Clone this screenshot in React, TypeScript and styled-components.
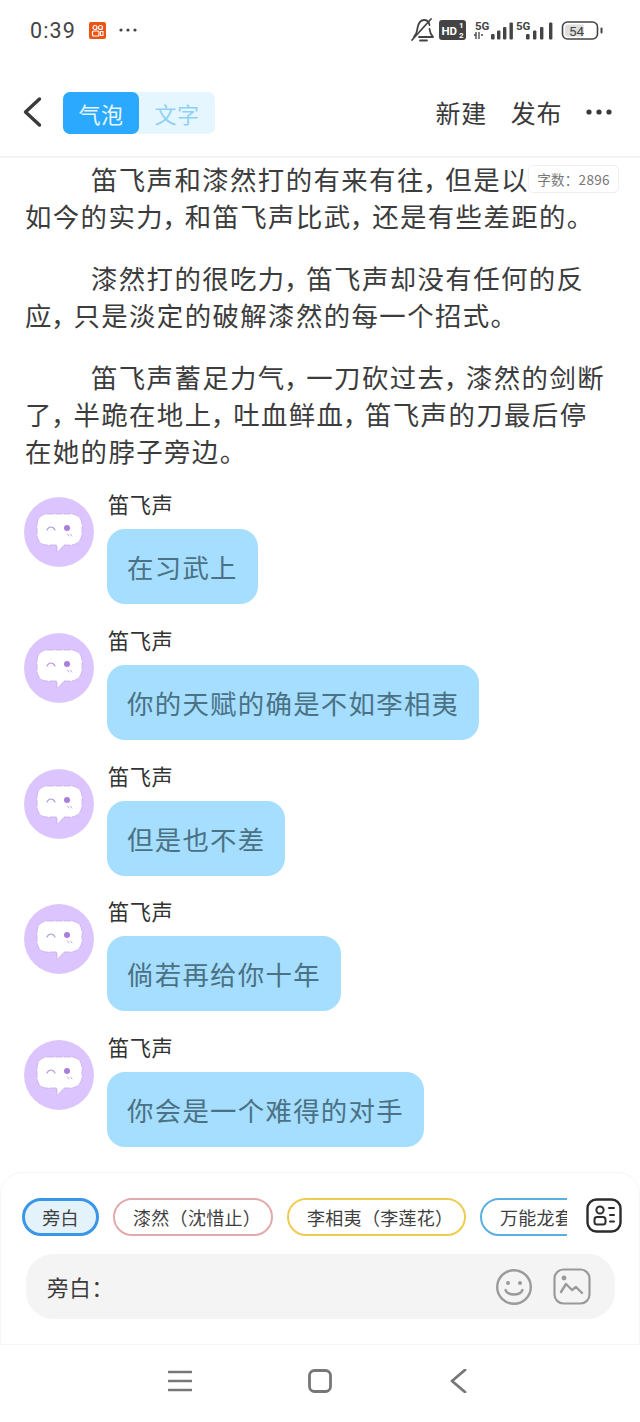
import React from "react";
import styled, { createGlobalStyle } from "styled-components";

const Global = createGlobalStyle`
  html, body { margin: 0; padding: 0; background: #fff; }
  body { font-family: "Noto Sans CJK SC", "Noto Sans", sans-serif; }
  * { box-sizing: border-box; }
`;

const Page = styled.div`
  position: relative;
  width: 640px;
  height: 1422px;
  overflow: hidden;
  display: flex;
  flex-direction: column;
  background: #fff;
`;

const StatusBar = styled.div`
  height: 60px;
  flex: none;
  display: flex;
  align-items: center;
  padding: 0 35px 0 30px;
  color: #444;
`;
const Time = styled.span`
  font-family: Roboto, sans-serif;
  font-size: 21.5px;
  letter-spacing: 1.1px;
  color: #444;
`;
const AppIcon = styled.svg`
  width: 17px;
  height: 17px;
  margin-left: 13px;
`;
const StatusDots = styled.svg`
  width: 20px;
  height: 6px;
  margin-left: 12px;
`;
const Spacer = styled.div`
  flex: 1;
`;
const StatusIcons = styled.svg`
  width: 195px;
  height: 28px;
`;

const Header = styled.div`
  height: 98px;
  flex: none;
  display: flex;
  align-items: center;
  padding: 8px 28px 0 23px;
  border-bottom: 2px solid #f3f3f3;
`;
const BackIcon = styled.svg`
  width: 19px;
  height: 32px;
`;
const Tabs = styled.div`
  display: flex;
  width: 152px;
  height: 42px;
  margin: 1px 0 0 21px;
  background: #e6f6fe;
  border-radius: 7px;
`;
const Tab = styled.div<{ $active?: boolean }>`
  width: 76px;
  display: flex;
  align-items: center;
  justify-content: center;
  border-radius: 7px;
  font-size: 22px;
  letter-spacing: 0.5px;
  background: ${(p) => (p.$active ? "#2aa9ff" : "transparent")};
  color: ${(p) => (p.$active ? "#e8f6ff" : "#8fd1f6")};
`;
const HeaderAction = styled.div`
  font-size: 25px;
  color: #3a3a3a;
  letter-spacing: 0.6px;
  margin-right: 24px;
  line-height: 1;
`;
const MoreDots = styled.svg`
  width: 26px;
  height: 6px;
`;

const Counter = styled.div`
  position: absolute;
  left: 528px;
  top: 165px;
  width: 91px;
  height: 28px;
  border: 1px solid #efefef;
  border-radius: 5px;
  background: #fff;
  color: #777;
  font-size: 13.5px;
  display: flex;
  align-items: center;
  justify-content: center;
  letter-spacing: 0.3px;
  white-space: nowrap;
`;

const Content = styled.div`
  flex: 1;
  min-height: 0;
  padding: 2px 25px 0 25px;
  overflow: hidden;
`;
const Para = styled.p`
  margin: 0 0 25px;
  font-size: 26.4px;
  line-height: 37px;
  letter-spacing: 1.42px;
  text-indent: 66px;
  color: #3c3c3c;
  &:last-of-type {
    margin-bottom: 28px;
  }
`;
const Comma = styled.span`
  font-feature-settings: "palt";
  margin-right: 6px;
`;

const Message = styled.div`
  display: flex;
  gap: 13px;
  height: 135.75px;
  margin-left: -1px;
`;
const Avatar = styled.svg`
  width: 70px;
  height: 70px;
  flex: none;
`;
const MsgBody = styled.div`
  display: flex;
  flex-direction: column;
  align-items: flex-start;
`;
const Name = styled.div`
  font-size: 21.2px;
  line-height: 32px;
  height: 32px;
  margin-left: 1px;
  margin-top: -9px;
  color: #333;
  letter-spacing: 0.6px;
`;
const Bubble = styled.div`
  height: 75px;
  margin-top: 9px;
  padding: 0 20px;
  display: flex;
  align-items: center;
  border-radius: 18px;
  background: #a5deff;
  color: #4b7184;
  font-size: 26.4px;
  letter-spacing: 1.3px;
  white-space: nowrap;
`;

const Panel = styled.div`
  height: 173px;
  flex: none;
  border: 1px solid #f6f6f6;
  border-radius: 22px 22px 0 0;
  padding: 25px 0 0 21px;
  display: flex;
  flex-direction: column;
`;
const ChipRow = styled.div`
  display: flex;
  align-items: flex-start;
`;
const ChipScroll = styled.div`
  width: 545px;
  height: 38px;
  display: flex;
  gap: 14px;
  overflow: hidden;
  flex: none;
`;
const Chip = styled.div<{ $color: string; $w: number; $selected?: boolean }>`
  width: ${(p) => p.$w}px;
  height: 38px;
  flex: none;
  border-radius: 19px;
  border: ${(p) => (p.$selected ? 3 : 2)}px solid ${(p) => p.$color};
  background: ${(p) => (p.$selected ? "#e3f2fb" : "#fff")};
  color: #3f3f3f;
  font-size: 18px;
  letter-spacing: 0.3px;
  display: flex;
  align-items: center;
  justify-content: ${(p) => (p.$selected ? "center" : "flex-start")};
  padding-left: ${(p) => (p.$selected ? 0 : 18)}px;
  white-space: nowrap;
`;
const ContactIcon = styled.svg`
  width: 36px;
  height: 35px;
  margin-left: 19px;
`;
const InputBar = styled.div`
  width: 589px;
  height: 65px;
  margin: 18px 0 0 4px;
  border-radius: 27px;
  background: #f4f4f4;
  display: flex;
  align-items: center;
  padding: 0 24px 0 21px;
`;
const InputLabel = styled.div`
  font-size: 21.5px;
  color: #3a3a3a;
  letter-spacing: 0.8px;
  flex: 1;
  font-feature-settings: "palt";
`;
const InputIcon = styled.svg`
  width: 38px;
  height: 38px;
  margin-left: 20px;
`;

const NavBar = styled.div`
  height: 77px;
  flex: none;
  display: flex;
  align-items: center;
  justify-content: center;
  gap: 116px;
  padding-bottom: 5px;
`;
const NavIcon = styled.svg`
  width: 24px;
  height: 24px;
`;

const BubbleAvatar = () => (
  <Avatar viewBox="0 0 70 70">
    <circle cx="35" cy="35" r="35" fill="#dcc5ff" />
    <path
      d="M23 17 H47 C54 17 58 22 58 28 V36 C58 43 53 48 47 48 H40 L33 56 L33 48 H23 C16 48 13 43 13 36 V28 C13 22 17 17 23 17 Z"
      fill="#fff"
      stroke="#c8a9ea"
      strokeWidth="0.8"
      strokeDasharray="7 1.5"
    />
    <path d="M23 33 C25 29 29 29 31 33" fill="none" stroke="#b79ae0" strokeWidth="1.2" strokeLinecap="round" />
    <circle cx="43" cy="31" r="3" fill="#a97fdc" />
    <path d="M43.5 37 L45 39 M46.5 37 L48 39" stroke="#c8a9ea" strokeWidth="1" strokeLinecap="round" />
  </Avatar>
);

const ParaLines = ({ lines }: { lines: string[] }) => (
  <Para>
    {lines.map((line, n) => (
      <React.Fragment key={n}>
        {n > 0 && <br />}
        {line.split("，").flatMap((part, i) =>
          i === 0 ? [part] : [<Comma key={i}>，</Comma>, part]
        )}
      </React.Fragment>
    ))}
  </Para>
);

const Bars = ({ x, gaps }: { x: number; gaps: number[] }) => (
  <g fill="#444">
    <rect x={x} y="18" width="3.6" height="5.5" rx="1.2" />
    <rect x={x + gaps[0]} y="14.5" width="3.4" height="9" rx="1" />
    <rect x={x + gaps[1]} y="11" width="3.4" height="12.5" rx="1" />
    <rect x={x + gaps[2]} y="6.5" width="3.4" height="17" rx="1" />
  </g>
);

const texts = ["在习武上", "你的天赋的确是不如李相夷", "但是也不差", "倘若再给你十年", "你会是一个难得的对手"];

export default function App() {
  return (
    <Page>
      <Global />
      <StatusBar>
        <Time>0:39</Time>
        <AppIcon viewBox="0 0 17 17">
          <rect width="17" height="17" rx="2" fill="#ea5414" />
          <circle cx="6" cy="5.5" r="2" fill="none" stroke="#fff" strokeWidth="1.2" />
          <circle cx="11.5" cy="5.5" r="2" fill="none" stroke="#fff" strokeWidth="1.2" />
          <rect x="3.5" y="9" width="6.5" height="5" rx="1" fill="none" stroke="#fff" strokeWidth="1.2" />
          <rect x="11.5" y="9.5" width="2.5" height="4" fill="none" stroke="#fff" strokeWidth="1" />
        </AppIcon>
        <StatusDots viewBox="0 0 20 6">
          <circle cx="3" cy="3" r="1.6" fill="#444" />
          <circle cx="10" cy="3" r="1.6" fill="#444" />
          <circle cx="17" cy="3" r="1.6" fill="#444" />
        </StatusDots>
        <Spacer />
        <StatusIcons viewBox="0 0 195 28">
          <g fill="none" stroke="#444" strokeWidth="1.8" strokeLinecap="round" strokeLinejoin="round">
            <path d="M4 21 C7 18 7 15 7.5 12 C8.5 7 11 4 14 4 C17 4 19 6 19.5 9 M19.5 13 C20 17 21 19 23 21 H9" />
            <path d="M2 24 L21 3" />
            <path d="M10 24.5 H17" />
          </g>
          <rect x="29" y="4" width="27" height="20" rx="3" fill="#444" />
          <text x="31.5" y="19" fontFamily="Roboto, sans-serif" fontWeight="700" fontSize="11.5" fill="#fff">HD</text>
          <text x="49" y="12" fontFamily="Roboto, sans-serif" fontWeight="700" fontSize="8" fill="#fff">1</text>
          <text x="49" y="22" fontFamily="Roboto, sans-serif" fontWeight="700" fontSize="8" fill="#fff">2</text>
          <text x="65" y="14" fontFamily="Roboto, sans-serif" fontWeight="700" fontSize="11.5" fill="#444">5G</text>
          <path d="M64 19 H66 M66 16 V23 M69 16 V23 M71 19 H73" stroke="#444" strokeWidth="1.3" />
          <Bars x={81} gaps={[6, 12, 18.5]} />
          <text x="106" y="14" fontFamily="Roboto, sans-serif" fontWeight="700" fontSize="11.5" fill="#444">5G</text>
          <Bars x={116} gaps={[7, 14, 23]} />
          <rect x="152.5" y="6" width="35" height="17" rx="5" fill="none" stroke="#444" strokeWidth="1.6" />
          <rect x="155" y="8.5" width="19" height="12" rx="2.5" fill="#dedede" />
          <text x="159" y="19.5" fontFamily="Roboto, sans-serif" fontSize="13.5" fill="#444">54</text>
          <rect x="190.5" y="11.5" width="2" height="6" rx="1" fill="#444" />
        </StatusIcons>
      </StatusBar>

      <Header>
        <BackIcon viewBox="0 0 19 32">
          <path d="M16.5 3 L2.5 16 L16.5 29" fill="none" stroke="#3a3a3a" strokeWidth="3.4" strokeLinecap="round" strokeLinejoin="round" />
        </BackIcon>
        <Tabs>
          <Tab $active>气泡</Tab>
          <Tab>文字</Tab>
        </Tabs>
        <Spacer />
        <HeaderAction>新建</HeaderAction>
        <HeaderAction>发布</HeaderAction>
        <MoreDots viewBox="0 0 26 6">
          <circle cx="3" cy="3" r="2.6" fill="#3a3a3a" />
          <circle cx="13" cy="3" r="2.6" fill="#3a3a3a" />
          <circle cx="23" cy="3" r="2.6" fill="#3a3a3a" />
        </MoreDots>
      </Header>

      <Counter>字数：2896</Counter>

      <Content>
        <ParaLines lines={["笛飞声和漆然打的有来有往，但是以", "如今的实力，和笛飞声比武，还是有些差距的。"]} />
        <ParaLines lines={["漆然打的很吃力，笛飞声却没有任何的反", "应，只是淡定的破解漆然的每一个招式。"]} />
        <ParaLines lines={["笛飞声蓄足力气，一刀砍过去，漆然的剑断", "了，半跪在地上，吐血鲜血，笛飞声的刀最后停", "在她的脖子旁边。"]} />
        {texts.map((t) => (
          <Message key={t}>
            <BubbleAvatar />
            <MsgBody>
              <Name>笛飞声</Name>
              <Bubble>{t}</Bubble>
            </MsgBody>
          </Message>
        ))}
      </Content>

      <Panel>
        <ChipRow>
          <ChipScroll>
            <Chip $color="#3a96e6" $w={77} $selected>旁白</Chip>
            <Chip $color="#e3a9ac" $w={160}>漆然（沈惜止）</Chip>
            <Chip $color="#f0cb53" $w={179}>李相夷（李莲花）</Chip>
            <Chip $color="#5aaee0" $w={180}>万能龙套</Chip>
          </ChipScroll>
          <ContactIcon viewBox="0 0 36 35">
            <rect x="1.5" y="1.5" width="33" height="32" rx="9" fill="none" stroke="#2c2c2c" strokeWidth="2.4" />
            <circle cx="14" cy="12" r="3.6" fill="none" stroke="#2c2c2c" strokeWidth="2" />
            <rect x="8.5" y="19" width="11" height="7.5" rx="2.5" fill="none" stroke="#2c2c2c" strokeWidth="2" />
            <path d="M23 10 H28 M24 17 H28 M24 23.5 H28" stroke="#2c2c2c" strokeWidth="2" strokeLinecap="round" />
          </ContactIcon>
        </ChipRow>
        <InputBar>
          <InputLabel>旁白：</InputLabel>
          <InputIcon viewBox="0 0 38 38">
            <circle cx="19" cy="19" r="16.8" fill="none" stroke="#9a9a9a" strokeWidth="2.4" />
            <circle cx="13" cy="15" r="2" fill="#9a9a9a" />
            <circle cx="25" cy="15" r="2" fill="#9a9a9a" />
            <path d="M10.5 22 C13 28 25 28 27.5 22" fill="none" stroke="#9a9a9a" strokeWidth="2.4" strokeLinecap="round" />
          </InputIcon>
          <InputIcon viewBox="0 0 38 38">
            <rect x="1.5" y="1.5" width="35" height="34" rx="9" fill="none" stroke="#9a9a9a" strokeWidth="2.2" />
            <circle cx="11" cy="10" r="2.4" fill="#9a9a9a" />
            <path d="M8 24 L13 16 L19 22 L23 19 L29 25" fill="none" stroke="#9a9a9a" strokeWidth="2.4" strokeLinecap="round" strokeLinejoin="round" />
          </InputIcon>
        </InputBar>
      </Panel>

      <NavBar>
        <NavIcon viewBox="0 0 24 24">
          <path d="M1 3 H23 M1 12 H23 M1 21 H23" stroke="#777" strokeWidth="2.6" strokeLinecap="round" />
        </NavIcon>
        <NavIcon viewBox="0 0 24 24">
          <rect x="1.5" y="1.5" width="21" height="21" rx="5" fill="none" stroke="#777" strokeWidth="2.8" />
        </NavIcon>
        <NavIcon viewBox="0 0 24 24">
          <path d="M17 1 L4 12 L17 23" fill="none" stroke="#777" strokeWidth="2.8" strokeLinecap="round" strokeLinejoin="round" />
        </NavIcon>
      </NavBar>
    </Page>
  );
}
